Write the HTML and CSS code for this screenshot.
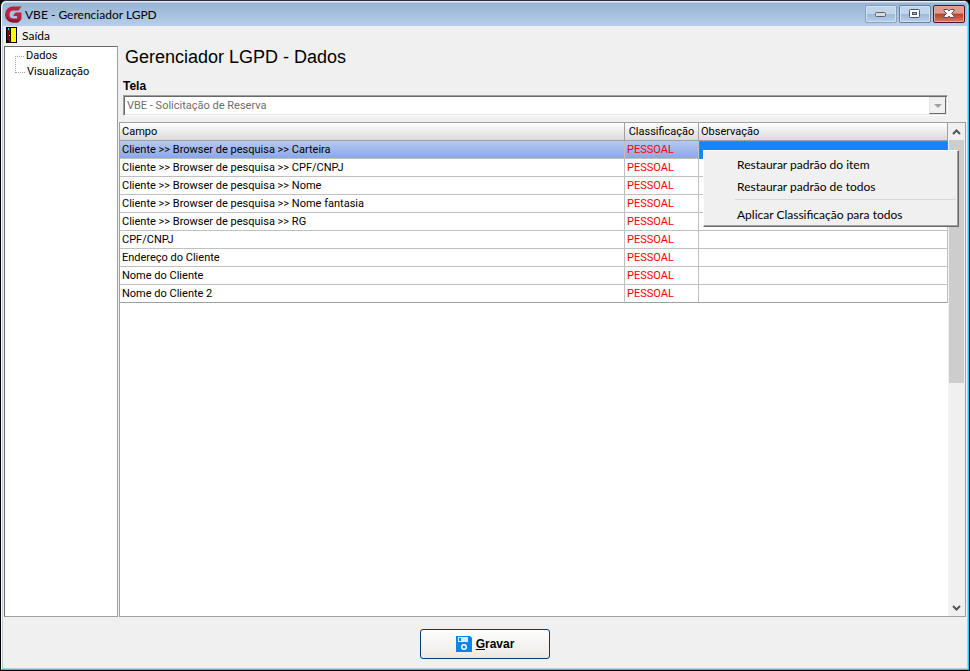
FILE: index.html
```html
<!DOCTYPE html>
<html lang="pt-BR">
<head>
  <meta charset="UTF-8" />
  <meta name="viewport" content="width=device-width, initial-scale=1.0" />
  <title>VBE - Gerenciador LGPD</title>
  <link rel="stylesheet" href="styles.css">
</head>
<body>
  <div class="window">
    <header class="titlebar">
      <svg class="logo" width="17" height="17" viewBox="0 0 17 17" aria-hidden="true">
        <path d="M16.500 0.500 L13.500 4.500 H8.500 A4 4 0 0 0 8.500 12.500 H12 V10 H8 L10.500 6.500 H16.500 V13 L13 16.500 H8 A8 8 0 0 1 8 0.500 Z" fill="#bd2140" />
        <path d="M0.500 9 A7.800 7.800 0 0 0 8 16.500 H13 L16 13.500 H9 A8 8 0 0 1 0.500 9 Z" fill="#861a34" />
      </svg>
      <span class="title">VBE - Gerenciador LGPD</span>
      <div class="controls">
        <button class="control faded" aria-label="Minimizar">
          <svg width="12" height="12" viewBox="0 0 12 12"><rect x="0.500" y="4.500" width="10" height="4" rx="1" fill="#dcdcdc" stroke="#606270" /></svg>
        </button>
        <button class="control" aria-label="Maximizar">
          <svg width="12" height="12" viewBox="0 0 12 12"><rect x="0.500" y="1.500" width="10" height="8" rx="1" fill="#fff" stroke="#4c5165" /><rect x="3.500" y="4.500" width="4" height="2" fill="#9db9d6" stroke="#4c5165" /></svg>
        </button>
        <button class="control close" aria-label="Fechar">
          <svg width="12" height="12" viewBox="0 0 12 12"><path d="M1 1.500 H4.500 L6 3 L7.500 1.500 H11 V3 L8.500 5.500 L11 8 V9.500 H7.500 L6 8 L4.500 9.500 H1 V8 L3.500 5.500 L1 3 Z" fill="#fff" stroke="#4d4e5e" /></svg>
        </button>
      </div>
    </header>

    <nav class="menubar">
      <button class="menu-btn">
        <svg width="12" height="16" viewBox="0 0 12 16" shape-rendering="crispEdges" aria-hidden="true">
          <rect width="11" height="16" fill="#000" />
          <rect x="5" y="1" width="5" height="14" fill="#ff0" />
          <path d="M1 2 H4 V15 H3 V14 H2 V13 H1 Z" fill="#800000" />
          <rect x="2" y="1" width="1" height="2" fill="#0ff" />
          <rect x="3" y="8" width="1" height="1" fill="#ff0" />
        </svg>
        Saída
      </button>
    </nav>

    <div class="content">
      <ul class="tree">
        <li><a href="#dados">Dados</a></li>
        <li><a href="#visualizacao">Visualização</a></li>
      </ul>

      <main class="panel" id="dados">
        <h1>Gerenciador LGPD - Dados</h1>
        <div class="field">
          <label for="tela">Tela</label>
          <div class="combo">
            <select id="tela" disabled>
              <option>VBE - Solicitação de Reserva</option>
            </select>
            <span class="combo-arrow"></span>
          </div>
        </div>

        <div class="grid">
          <div class="grid-body">
            <table>
              <colgroup>
                <col>
                <col class="col-class">
                <col class="col-obs">
              </colgroup>
              <thead>
                <tr><th>Campo</th><th class="center">Classificação</th><th>Observação</th></tr>
              </thead>
              <tbody>
                <tr class="selected"><td>Cliente &gt;&gt; Browser de pesquisa &gt;&gt; Carteira</td><td class="tag">PESSOAL</td><td class="active"></td></tr>
                <tr><td>Cliente &gt;&gt; Browser de pesquisa &gt;&gt; CPF/CNPJ</td><td class="tag">PESSOAL</td><td></td></tr>
                <tr><td>Cliente &gt;&gt; Browser de pesquisa &gt;&gt; Nome</td><td class="tag">PESSOAL</td><td></td></tr>
                <tr><td>Cliente &gt;&gt; Browser de pesquisa &gt;&gt; Nome fantasia</td><td class="tag">PESSOAL</td><td></td></tr>
                <tr><td>Cliente &gt;&gt; Browser de pesquisa &gt;&gt; RG</td><td class="tag">PESSOAL</td><td></td></tr>
                <tr><td>CPF/CNPJ</td><td class="tag">PESSOAL</td><td></td></tr>
                <tr><td>Endereço do Cliente</td><td class="tag">PESSOAL</td><td></td></tr>
                <tr><td>Nome do Cliente</td><td class="tag">PESSOAL</td><td></td></tr>
                <tr><td>Nome do Cliente 2</td><td class="tag">PESSOAL</td><td></td></tr>
              </tbody>
            </table>
          </div>
          <div class="scrollbar">
            <button class="scroll-btn" aria-label="Rolar para cima"><svg width="9" height="6" viewBox="0 0 9 6"><path d="M1 5 L4.500 1.500 L8 5" fill="none" stroke="#555" stroke-width="2" /></svg></button>
            <div class="track"><div class="thumb"></div></div>
            <button class="scroll-btn" aria-label="Rolar para baixo"><svg width="9" height="6" viewBox="0 0 9 6"><path d="M1 1 L4.500 4.500 L8 1" fill="none" stroke="#555" stroke-width="2" /></svg></button>
          </div>

          <div class="context-menu">
            <button>Restaurar padrão do item</button>
            <button>Restaurar padrão de todos</button>
            <hr>
            <button>Aplicar Classificação para todos</button>
          </div>
        </div>
      </main>
    </div>

    <footer class="footer">
      <button class="save-btn">
        <svg width="16" height="16" viewBox="0 0 16 16" aria-hidden="true">
          <path d="M0 0 H14 L16 2 V16 H0 Z" fill="#0a84e8" />
          <rect x="2" y="1" width="10" height="5" fill="#d5ebff" />
          <rect x="3" y="2" width="2" height="3" fill="#0a84e8" />
          <circle cx="8" cy="11" r="2.300" fill="none" stroke="#fff" stroke-width="1.500" />
        </svg>
        <span><u>G</u>ravar</span>
      </button>
    </footer>
  </div>
</body>
</html>
```
FILE: styles.css
```css
* {
  box-sizing: border-box;
}

body {
  margin: 0;
  background-color: #000;
  color: #000;
  font-family: Roboto, "Liberation Sans", sans-serif;
  font-size: 11px;
}

button {
  font: inherit;
  color: inherit;
  cursor: pointer;
}

.window {
  display: flex;
  flex-direction: column;
  height: 100vh;
  padding: 0 2px 2px;
  background-color: #b4cde8;
  border: 1px solid #000;
  border-top-color: #2c2c36;
  border-radius: 6px 6px 0 0;
  box-shadow: inset -1px -1px 0 #22c8ee, inset 1px 1px 0 #fff;
}

.titlebar {
  display: flex;
  align-items: center;
  height: 25px;
  padding: 1px 2px 0;
  background: linear-gradient(#e2edf8 0 1px, #98b4d2 2px, #b5cee9);
  border-radius: 5px 5px 0 0;
  font-family: Lato, "Segoe UI", sans-serif;
  font-size: 12px;
}

.title {
  margin-left: 3px;
}

.controls {
  display: flex;
  gap: 2px;
  margin-left: auto;
}

.control {
  display: flex;
  align-items: center;
  justify-content: center;
  width: 32px;
  height: 18px;
  padding: 0;
  background: linear-gradient(#c0d4ea 50%, #9cb9d7 50%, #b7d0ea);
  border: 1px solid #6b7f9c;
  border-radius: 2px;
  box-shadow: inset 0 0 0 1px #cfe0f2;
}

.faded {
  border-color: #8ba0bb;
}

.close {
  background: linear-gradient(#dd9c8f 45%, #bd3e28 50%, #d47c62);
  border-color: #4f1726;
  box-shadow: inset 0 0 0 1px #e1a597;
}

.menubar {
  display: flex;
  height: 20px;
  background-color: #f0f0f0;
}

.menu-btn {
  display: flex;
  align-items: center;
  gap: 4px;
  padding: 0 3px 2px;
  background: none;
  border: none;
  font-family: Lato, "Segoe UI", sans-serif;
  font-size: 12px;
}

.content {
  display: flex;
  flex: 1;
  gap: 1px;
  min-height: 0;
  padding: 0 1px;
  background-color: #f0f0f0;
}

.tree {
  width: 114px;
  margin: 0;
  padding: 1px 0 0 10px;
  background-color: #fff;
  border: 1px solid #a0a0a0;
  border-top-color: #696969;
  border-left-color: #696969;
  list-style: none;
}

.tree li {
  display: flex;
  height: 16px;
  line-height: 16px;
}

.tree li::before {
  content: "";
  flex: none;
  width: 9px;
  height: 8px;
  margin-right: 2px;
  border-bottom: 1px dotted #a0a0a0;
}

.tree li:last-child::before {
  height: 16px;
  margin-top: -8px;
  border-left: 1px dotted #a0a0a0;
}

.tree a {
  color: inherit;
  text-decoration: none;
}

.panel {
  display: flex;
  flex: 1;
  flex-direction: column;
  min-width: 0;
}

h1 {
  margin: 0 0 10px 6px;
  font-family: "Liberation Sans", Arial, sans-serif;
  font-size: 18px;
  font-weight: normal;
  line-height: 22px;
}

.field {
  margin: 0 18px 6px 4px;
}

label {
  display: block;
  margin-bottom: 1px;
  font-family: "Liberation Sans", Arial, sans-serif;
  font-size: 12px;
  font-weight: bold;
  line-height: 16px;
}

.combo {
  display: flex;
  height: 21px;
  background-color: #fff;
  border: 1px solid #a0a0a0;
  border-right-color: #fff;
  border-bottom-color: #fff;
  box-shadow: inset 1px 1px 0 #696969, inset -1px -1px 0 #e3e3e3;
}

select {
  flex: 1;
  padding: 0 3px;
  appearance: none;
  background: none;
  border: none;
  color: #6d6d6d;
  font: inherit;
  opacity: 1;
}

.combo-arrow {
  display: flex;
  align-items: center;
  justify-content: center;
  width: 17px;
  margin: 1px;
  background-color: #f0f0f0;
  border: 1px solid #e3e3e3;
  border-right-color: #696969;
  border-bottom-color: #696969;
}

.combo-arrow::before {
  content: "";
  border: 4px solid transparent;
  border-top-color: #a0a0a0;
  border-bottom: none;
}

.grid {
  position: relative;
  display: flex;
  flex: 1;
  min-height: 0;
  background-color: #fff;
  border: 1px solid #a0a0a0;
}

.grid-body {
  flex: 1;
}

table {
  width: 100%;
  border-collapse: separate;
  border-spacing: 0;
  table-layout: fixed;
}

.col-class {
  width: 74px;
}

.col-obs {
  width: 249px;
}

th,
td {
  height: 18px;
  padding: 0 2px;
  border-right: 1px solid #c0c0c0;
  border-bottom: 1px solid #c0c0c0;
  line-height: 17px;
  text-align: left;
  white-space: nowrap;
}

th {
  background: linear-gradient(#fff, #dadada);
  border-color: #a0a0a0;
  font-weight: normal;
}

th.center {
  text-align: center;
}

tbody tr:last-child td {
  border-bottom-color: #a0a0a0;
}

.tag {
  color: #f00;
}

.selected td {
  background: linear-gradient(#b6c8f2, #8ba8e6);
}

.selected .active {
  background: #1684fa;
  border: 1px dotted #c87828;
}

.scrollbar {
  display: flex;
  flex-direction: column;
  width: 17px;
  background-color: #f0f0f0;
}

.scroll-btn {
  display: flex;
  align-items: center;
  justify-content: center;
  height: 17px;
  padding: 0;
  background: none;
  border: none;
}

.track {
  flex: 1;
}

.thumb {
  width: 15px;
  height: 53%;
  margin: 0 1px;
  background-color: #cdcdcd;
}

.context-menu {
  position: absolute;
  top: 27px;
  right: 6px;
  width: 256px;
  padding: 2px 2px 1px;
  background-color: #f0f0f0;
  border: 1px solid #fff;
  border-right-color: #696969;
  border-bottom-color: #696969;
  box-shadow: inset -1px -1px 0 #a0a0a0;
  font-family: Lato, "Segoe UI", sans-serif;
  font-size: 12px;
}

.context-menu button {
  display: block;
  width: 100%;
  height: 22px;
  padding: 0 0 0 31px;
  background: none;
  border: none;
  text-align: left;
}

.context-menu hr {
  height: 1px;
  margin: 2px 0 3px 29px;
  background-color: #d7d7d7;
  border: none;
}

.footer {
  display: flex;
  justify-content: center;
  padding: 12px 0 9px;
  background-color: #f0f0f0;
}

.save-btn {
  display: flex;
  align-items: center;
  justify-content: center;
  gap: 4px;
  width: 130px;
  height: 30px;
  background: linear-gradient(#fff, #ece9e4);
  border: 1px solid #003c74;
  border-radius: 3px;
  font-family: "Liberation Sans", Arial, sans-serif;
  font-size: 12px;
  font-weight: bold;
}
```
